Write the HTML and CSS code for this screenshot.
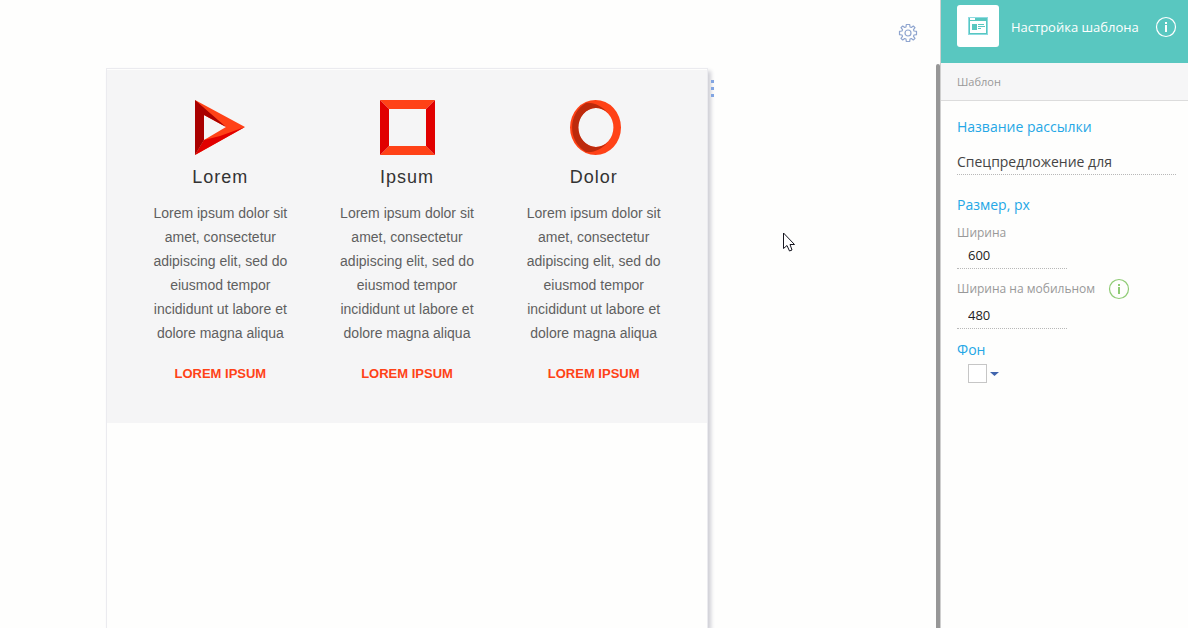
FILE: index.html
```html
<!DOCTYPE html>
<html lang="ru">
<head>
<meta charset="utf-8">
<title>Настройка шаблона</title>
<link rel="stylesheet" href="styles.css">
</head>
<body>
<div class="app">
  <main class="workspace">
    <div class="stage">
      <article class="canvas">
        <button class="drag-handle" aria-label="Меню блока"><i></i><i></i><i></i></button>
        <div class="features">
          <section class="feature">
            <svg class="feature-icon" width="56" height="56" viewBox="0 0 56 56" aria-hidden="true">
              <path d="M3 0 53 27 3 55 12 40 34 27 12 15z" fill="#ff4217"/>
              <path d="M53 27 3 55 12 40 28 36z" fill="#e10000"/>
              <path d="M3 0 34 27 12 15V40L3 55z" fill="#a90000"/>
            </svg>
            <h2 class="feature-title">Lorem</h2>
            <p class="feature-text">Lorem ipsum dolor sit amet, consectetur adipiscing elit, sed do eiusmod tempor incididunt ut labore et dolore magna aliqua</p>
            <a class="feature-link" href="#">LOREM IPSUM</a>
          </section>
          <section class="feature">
            <svg class="feature-icon" width="56" height="56" viewBox="0 0 56 56" aria-hidden="true">
              <path d="M1 0H56L47 9H10zM1 55 10 46H47L56 55z" fill="#ff4217"/>
              <path d="M1 0 10 9V46L1 55zM56 0 47 9V46L56 55z" fill="#e10000"/>
            </svg>
            <h2 class="feature-title">Ipsum</h2>
            <p class="feature-text">Lorem ipsum dolor sit amet, consectetur adipiscing elit, sed do eiusmod tempor incididunt ut labore et dolore magna aliqua</p>
            <a class="feature-link" href="#">LOREM IPSUM</a>
          </section>
          <section class="feature">
            <svg class="feature-icon" width="56" height="56" viewBox="0 0 56 56" aria-hidden="true">
              <path fill-rule="evenodd" d="M4 27.500A25.500 27.500 0 0 1 55 27.500A25.500 27.500 0 0 1 4 27.500zM12 27.500A17.700 19.500 0 0 0 47.400 27.500A17.700 19.500 0 0 0 12 27.500z" fill="#ff4217"/>
              <path d="M42 13C36 6 27 2 20 3A25.500 27.500 0 0 0 20 52C28 53 36 49 42 42A17.700 19.500 0 1 1 42 13z" fill="#bd2a0c"/>
            </svg>
            <h2 class="feature-title">Dolor</h2>
            <p class="feature-text">Lorem ipsum dolor sit amet, consectetur adipiscing elit, sed do eiusmod tempor incididunt ut labore et dolore magna aliqua</p>
            <a class="feature-link" href="#">LOREM IPSUM</a>
          </section>
        </div>
      </article>
    </div>
    <div class="rail">
      <button class="gear" aria-label="Настройки">
        <svg width="20" height="20" viewBox="0 0 20 20" fill="none" stroke="#8fa5cf" stroke-width="1.200" stroke-linejoin="round">
          <path d="M8.300 1.500H11.700L12 4 13.300 4.500 15.300 3 17 4.700 15.500 6.700 16 8 18.500 8.300V11.700L16 12 15.500 13.300 17 15.300 15.300 17 13.300 15.500 12 16 11.700 18.500H8.300L8 16 6.700 15.500 4.700 17 3 15.300 4.500 13.300 4 12 1.500 11.700V8.300L4 8 4.500 6.700 3 4.700 4.700 3 6.700 4.500 8 4z"/>
          <circle cx="10" cy="10" r="3"/>
        </svg>
      </button>
    </div>
    <div class="scroll-thumb"></div>
    <svg class="cursor" width="13" height="20" viewBox="0 0 13 20" aria-hidden="true">
      <path d="M.5 1V16.500L4 13.500 6.500 19 9 18 7 12.500H11.500z" fill="#fff" stroke="#15151f"/>
    </svg>
  </main>

  <aside class="sidebar">
    <header class="panel-head">
      <span class="panel-tile">
        <svg width="20" height="18" viewBox="0 0 20 18" aria-hidden="true">
          <path fill="#8fdbe2" d="M0 0H20V18H0z"/>
          <path fill="#59c7c0" d="M1 1H19V17H1z"/>
          <path fill="#fff" d="M2 1H7V3H2zM2 4H18V16H2z"/>
          <path fill="#59c7c0" d="M4 7H9V13H4zM10 7H16V8H10zM10 9H17V10H10zM10 11H13V12H10z"/>
        </svg>
      </span>
      <h1 class="panel-title">Настройка шаблона</h1>
      <button class="info info-light" aria-label="Справка">
        <svg width="22" height="22" viewBox="0 0 22 22"><circle cx="11" cy="11" r="9.500" fill="none" stroke="currentColor" stroke-width="1.200"/><path fill="currentColor" d="M10 6H12V8H10zM10 9H12V16H10z"/></svg>
      </button>
    </header>
    <div class="section-bar">Шаблон</div>
    <form class="settings">
      <label class="group-title" for="name">Название рассылки</label>
      <input class="field field-name" id="name" type="text" value="Спецпредложение для">
      <h2 class="group-title">Размер, px</h2>
      <label class="caption" for="width">Ширина</label>
      <input class="field field-number" id="width" type="text" value="600">
      <div class="caption-row">
        <label class="caption" for="mobile">Ширина на мобильном</label>
        <button type="button" class="info info-green" aria-label="Подсказка">
          <svg width="22" height="22" viewBox="0 0 22 22"><circle cx="11" cy="11" r="9.500" fill="none" stroke="currentColor" stroke-width="1.200"/><path fill="currentColor" d="M10 6H12V8H10zM10 9H12V16H10z"/></svg>
        </button>
      </div>
      <input class="field field-number" id="mobile" type="text" value="480">
      <h2 class="group-title background-title">Фон</h2>
      <button type="button" class="color-picker" aria-label="Цвет фона"><span class="swatch"></span><svg width="9" height="4" viewBox="0 0 9 4" aria-hidden="true"><path d="M0 0H9L4.500 4z" fill="#4165ad"/></svg></button>
    </form>
  </aside>
</div>
</body>
</html>
```
FILE: styles.css
```css
* { box-sizing: border-box; }
body { margin: 0; background: #fefefd; font-family: "Open Sans", sans-serif; }
h1, h2, p { margin: 0; font-weight: 400; }
button { padding: 0; border: 0; background: none; cursor: pointer; }
svg { display: block; }

.app { display: flex; min-height: 100vh; }
.workspace { position: relative; flex: 1; display: flex; }
.stage { flex: 1; display: flex; justify-content: center; padding-top: 68px; }
.canvas {
  position: relative;
  width: 602px;
  padding-top: 1px;
  border: 1px solid #ebebef;
  border-bottom: 0;
  box-shadow: 3px 3px 4px #cfcfd6;
  background: #fefefd;
}
.features { display: flex; padding: 30px 20px 37px; background: #f5f5f6; }
.feature {
  flex: 1;
  display: flex;
  flex-direction: column;
  align-items: center;
  padding: 0 20px;
  font-family: "Liberation Sans", Arial, sans-serif;
  text-align: center;
}
.feature-title { margin-top: 9px; font-size: 18px; line-height: 24px; letter-spacing: 1px; color: #333; }
.feature-text { margin-top: 12px; font-size: 14px; line-height: 24px; color: #5f5f5f; }
.feature-link { margin-top: 17px; font-size: 13px; line-height: 24px; font-weight: 700; color: #ff4217; text-decoration: none; }

.drag-handle { position: absolute; top: 11px; right: -7px; display: grid; gap: 4px; }
.drag-handle i { width: 3px; height: 3px; background: #82a5e2; }

.rail { width: 126px; padding: 23px 22px; display: flex; justify-content: flex-end; align-items: flex-start; }
.scroll-thumb { position: absolute; top: 64px; right: 0; bottom: 0; width: 4px; border-radius: 2px 2px 0 0; background: #979797; }
.cursor { position: absolute; top: 232px; left: 783px; }

.sidebar { width: 248px; border-left: 1px solid #cfcfcf; }
.panel-head { display: flex; align-items: center; height: 63px; padding: 0 11px 10px 16px; background: #59c7c0; color: #fff; }
.panel-tile { display: grid; place-items: center; width: 42px; height: 42px; margin-bottom: 2px; border-radius: 3px; background: #fff; }
.panel-title { flex: 1; margin-left: 12px; font-size: 13px; line-height: 20px; white-space: nowrap; }
.info-light { color: #fff; }
.info-green { color: #8fcb75; }
.section-bar { height: 38px; padding-left: 16px; border-bottom: 1px solid #dcdcdc; background: #f6f6f7; font-size: 11px; line-height: 38px; color: #999; }

.settings { display: flex; flex-direction: column; align-items: flex-start; padding: 16px 12px 16px 16px; }
.group-title { font-size: 14px; line-height: 20px; color: #25a7e6; }
.field { border: 0; border-bottom: 1px dotted #b8b8b8; outline: 0; background: none; font: 14px/20px "Open Sans", sans-serif; color: #444; }
.field-name { width: 100%; height: 26px; margin: 12px 0 20px; padding: 0; }
.caption { font-size: 12px; line-height: 18px; color: #999; }
.group-title + .caption { margin-top: 9px; }
.field-number { width: 110px; height: 27px; padding: 0 11px 1px; font-size: 13px; color: #222; }
.caption-row { display: flex; align-items: center; gap: 13px; margin: 9px 0 2px; }
.background-title { margin-top: 11px; }
.color-picker { display: flex; align-items: center; gap: 3px; margin: 4px 0 0 11px; }
.swatch { width: 19px; height: 19px; border: 1px solid #c6c6c6; background: #fff; }
```
